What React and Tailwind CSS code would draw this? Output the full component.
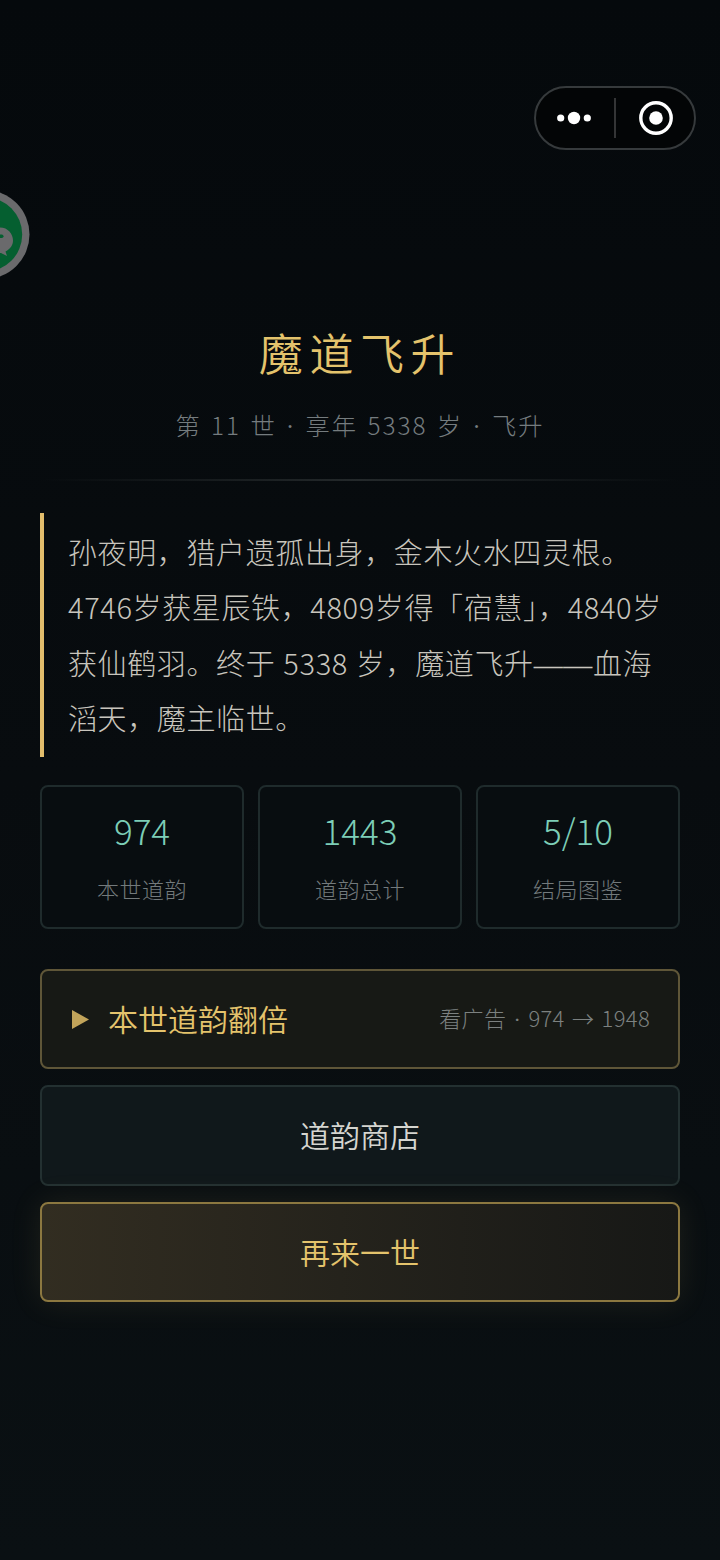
import React from "react";

const stats = [
  { value: "974", label: "本世道韵" },
  { value: "1443", label: "道韵总计" },
  { value: "5/10", label: "结局图鉴" },
];

// The CJK font draws these marks at another width, so they use the serif face
const Mark = ({ children }) => (
  <span className="font-['Liberation_Serif',serif] leading-none">{children}</span>
);

const Capsule = () => (
  <div className="flex h-16 w-[162px] items-center rounded-full border-2 border-[#363a3c] bg-[#030506]">
    <svg className="block" width="158" height="60" viewBox="0 0 158 60" aria-hidden="true">
      <circle cx="24.7" cy="30" r="3.6" fill="#fff" />
      <circle cx="38" cy="30" r="6.2" fill="#fff" />
      <circle cx="51.3" cy="30" r="3.6" fill="#fff" />
      <rect x="78" y="10" width="2" height="40" fill="#343536" />
      <circle cx="120" cy="30" r="15.2" fill="none" stroke="#fff" strokeWidth="3.4" />
      <circle cx="120" cy="30" r="6.8" fill="#fff" />
    </svg>
  </div>
);

const WeChatBadge = () => (
  <svg className="block" width="30" height="90" viewBox="0 0 30 90" aria-hidden="true">
    <circle cx="-15" cy="45.5" r="44.5" fill="#6a6a6c" />
    <circle cx="-15" cy="45.5" r="37.2" fill="#055f30" />
    <path d="M0 38.5C8 38.5 13 45 13 51.5C13 56 10.5 60 5.5 62.5L7 67L1 64C-6 65 -14 60 -14 51.5C-14 44 -8 38.5 0 38.5Z" fill="#6a6a6c" />
    <rect x="-4" y="45.5" width="7.5" height="3.5" rx="1.7" fill="#055f30" />
  </svg>
);

const App = () => {
  return (
    <div className="h-[1560px] w-[720px] overflow-hidden bg-linear-to-b from-[#05090c] via-[#080c0f] to-[#0a1013] font-['Noto_Sans_CJK_SC',sans-serif] font-light">
      <div className="flex justify-end pt-[86px] pr-6">
        <Capsule />
      </div>
      <div className="mt-[39px]">
        <WeChatBadge />
      </div>

      <main className="px-10 pt-10">
        <h1 className="h-[66px] text-center text-[44px] leading-[66px] font-[350] tracking-[0.15em] whitespace-nowrap text-[#e4c36c]">
          魔道飞升
        </h1>
        <p className="mt-5 h-10 text-center text-[24.3px] leading-10 tracking-[2px] [word-spacing:2px] whitespace-nowrap text-[#757c7f]">
          第 11 世 <Mark>·</Mark> 享年 5338 岁 <Mark>·</Mark> 飞升
        </p>
        <div className="mt-[34px] h-[2px] bg-linear-to-r from-transparent via-[#24292b] to-transparent"></div>

        <div className="mt-8 h-[244px] border-l-4 border-[#e2bd6c] py-[11px] pl-6 text-[29px] leading-[55.3px] tracking-[0.62px] [word-spacing:1px] whitespace-nowrap text-[#c8c5bd]">
          <p>孙夜明，猎户遗孤出身，金木火水四灵根。</p>
          <p>4746岁获星辰铁，4809岁得「宿慧」，4840岁</p>
          <p>获仙鹤羽。终于 5338 岁，魔道飞升<Mark>——</Mark>血海</p>
          <p>滔天，魔主临世。</p>
        </div>

        <div className="mt-7 grid grid-cols-3 gap-[14px]">
          {stats.map((item) => (
            <div key={item.label} className="flex h-36 flex-col items-center rounded-lg border-2 border-[#1f2b2c] bg-[#080d10] pt-5">
              <span className="text-[35px] leading-[46px] text-[#7dceb7]">{item.value}</span>
              <span className="mt-[19px] text-[22px] leading-8 tracking-[0.5px] text-[#737a7c]">{item.label}</span>
            </div>
          ))}
        </div>

        <div className="mt-[39.7px] flex flex-col gap-4">
          <button className="flex h-[100.5px] items-center rounded-lg border-2 border-[#5f5638] bg-[#171915] pr-7 pl-[30px]">
            <svg className="mt-[2px]" width="17" height="19" viewBox="0 0 17 19" aria-hidden="true">
              <path d="M0 0L17 9.5L0 19Z" fill="#c2a45a" />
            </svg>
            <span className="ml-[19px] pb-[2px] text-[30px] leading-none font-[350] text-[#e4c36c]">本世道韵翻倍</span>
            <span className="ml-auto text-[22px] leading-none tracking-[0.35px] [word-spacing:2px] text-[#7c8180]">
              看广告 <Mark>·</Mark> 974 → 1948
            </span>
          </button>
          <button className="h-[100.5px] rounded-lg border-2 border-[#233031] bg-[#10181b] pb-[2px] text-[30px] leading-none font-[350] text-[#d5d5d0]">
            道韵商店
          </button>
          <button className="h-[100.5px] rounded-lg border-2 border-[#8c7840] bg-linear-to-r from-[#322d21] to-[#171816] pb-[2px] text-[30px] leading-none font-[350] text-[#e4c36c] shadow-[0_0_32px_rgba(228,195,108,0.1)]">
            再来一世
          </button>
        </div>
      </main>
    </div>
  );
};

export default App;
